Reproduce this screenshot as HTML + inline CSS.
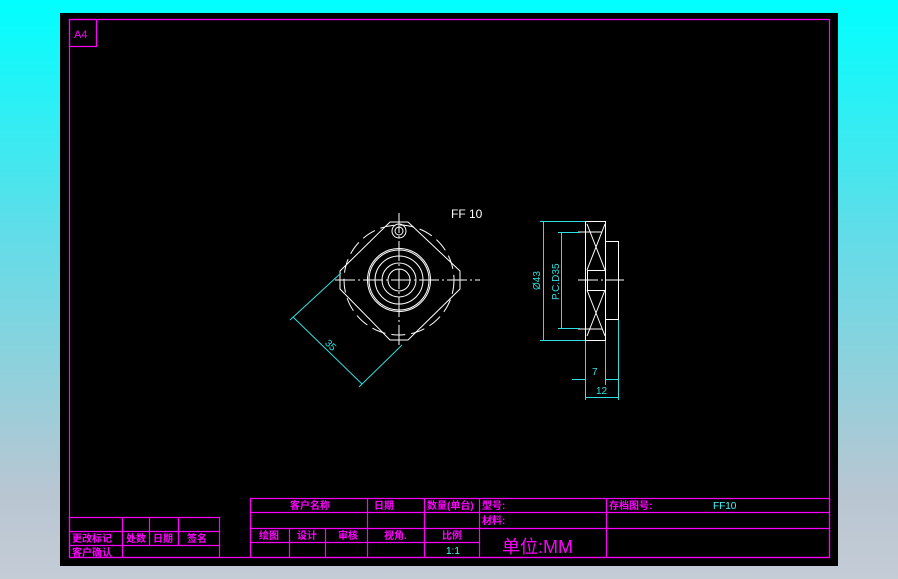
<!DOCTYPE html>
<html><head><meta charset="utf-8"><style>
html,body{margin:0;padding:0}
body{width:898px;height:579px;overflow:hidden;background:linear-gradient(#00ffff 0%,#60dde8 40%,#b8c6d2 85%,#c4ccd6 100%);position:relative}
svg{position:absolute;left:0;top:0}
text{font-family:"Liberation Sans","Noto Sans CJK SC",sans-serif}
</style></head><body>
<svg width="898" height="579" viewBox="0 0 898 579">
<rect x="60" y="13" width="778" height="553" fill="#000"/>
<g stroke="#ff00ff" stroke-width="1.2" fill="none">
<rect x="69.5" y="19.5" width="760" height="538"/>
<rect x="69.5" y="19.5" width="27" height="27"/>
<rect x="250.5" y="498.5" width="579" height="59"/>
<line x1="250" y1="512.5" x2="830" y2="512.5"/>
<line x1="250" y1="528.5" x2="830" y2="528.5"/>
<line x1="250" y1="542.5" x2="479" y2="542.5"/>
<line x1="289.5" y1="528" x2="289.5" y2="558"/>
<line x1="325.5" y1="528" x2="325.5" y2="558"/>
<line x1="367.5" y1="498" x2="367.5" y2="558"/>
<line x1="424.5" y1="498" x2="424.5" y2="558"/>
<line x1="479.5" y1="498" x2="479.5" y2="558"/>
<line x1="606.5" y1="498" x2="606.5" y2="558"/>
<rect x="69.5" y="517.5" width="150" height="40"/>
<line x1="69" y1="531.5" x2="220" y2="531.5"/>
<line x1="69" y1="545.5" x2="220" y2="545.5"/>
<line x1="122.5" y1="517" x2="122.5" y2="558"/>
<line x1="149.5" y1="517" x2="149.5" y2="545"/>
<line x1="178.5" y1="517" x2="178.5" y2="545"/>
</g>
<g fill="#ff00ff" font-size="10" font-weight="bold">
<text x="74" y="38" font-size="11" font-weight="normal">A4</text>
<text x="290" y="509">客户名称</text>
<text x="374" y="509">日期</text>
<text x="427" y="509">数量(单台)</text>
<text x="482" y="509">型号:</text>
<text x="609" y="509">存档图号:</text>
<text x="482" y="524">材料:</text>
<text x="259" y="539">绘图</text>
<text x="297" y="539">设计</text>
<text x="338" y="539">审核</text>
<text x="384" y="539">视角.</text>
<text x="442" y="539">比例</text>
<text x="502" y="553" font-size="18" font-weight="normal">单位:MM</text>
<text x="72" y="542">更改标记</text>
<text x="126" y="542">处数</text>
<text x="153" y="542">日期</text>
<text x="187" y="542">签名</text>
<text x="72" y="556">客户确认</text>
</g>
<g fill="#40ffff" font-size="10">
<text x="713" y="509">FF10</text>
<text x="446" y="554">1:1</text>
</g>
<g stroke="#fff" stroke-width="1" fill="none">
<polygon points="390,222 408,222 460,271 460,289 408,340 390,340 340,289 340,271"/>
<circle cx="399" cy="231" r="7"/><circle cx="399" cy="231" r="4"/>
<circle cx="399" cy="280" r="31.5"/><circle cx="399" cy="280" r="30"/>
<circle cx="399" cy="280" r="24"/><circle cx="399" cy="280" r="17"/><circle cx="399" cy="280" r="11"/>
<circle cx="399" cy="280" r="55" stroke-dasharray="14 6"/>
<line x1="335" y1="280" x2="480" y2="280" stroke-dasharray="20 3 2 3"/>
<line x1="399" y1="213" x2="399" y2="348" stroke-dasharray="20 3 2 3"/>
<rect x="585.5" y="221.5" width="20" height="119"/>
<rect x="605.5" y="241.5" width="13" height="78"/>
<rect x="587.5" y="270.5" width="18" height="20"/>
<path d="M587 224 L605 270 M605 224 L587 270 M587 290 L605 336 M605 290 L587 336"/>
<line x1="578" y1="280" x2="624" y2="280" stroke-dasharray="20 3 2 3"/>
<line x1="578" y1="232" x2="602" y2="232"/><line x1="578" y1="329" x2="602" y2="329"/>
</g>
<text x="451" y="218" fill="#fff" font-size="12">FF 10</text>
<g stroke="#30e0e0" stroke-width="1" fill="none">
<line x1="293" y1="317" x2="362" y2="384"/>
<line x1="290" y1="320" x2="341" y2="273"/>
<line x1="359" y1="387" x2="402" y2="345"/>
<line x1="543.5" y1="221" x2="543.5" y2="340"/>
<line x1="540" y1="221.5" x2="585" y2="221.5"/><line x1="540" y1="340.5" x2="585" y2="340.5"/>
<line x1="561.5" y1="232" x2="561.5" y2="328"/>
<line x1="558" y1="232.5" x2="580" y2="232.5"/><line x1="558" y1="328.5" x2="580" y2="328.5"/>
<line x1="585.5" y1="341" x2="585.5" y2="400"/>
<line x1="605.5" y1="341" x2="605.5" y2="385"/>
<line x1="618.5" y1="320" x2="618.5" y2="400"/>
<line x1="572" y1="379.5" x2="585" y2="379.5"/><line x1="605" y1="379.5" x2="618" y2="379.5"/>
<line x1="585" y1="397.5" x2="618" y2="397.5"/>
</g>
<g fill="#30e0e0" font-size="10">
<text x="325" y="348" transform="rotate(44 330 345)">35</text>
<text transform="translate(540 290) rotate(-90)">Ø43</text>
<text transform="translate(559 300) rotate(-90)">P.C.D35</text>
<text x="592" y="375">7</text>
<text x="596" y="394">12</text>
</g>
</svg>
</body></html>
